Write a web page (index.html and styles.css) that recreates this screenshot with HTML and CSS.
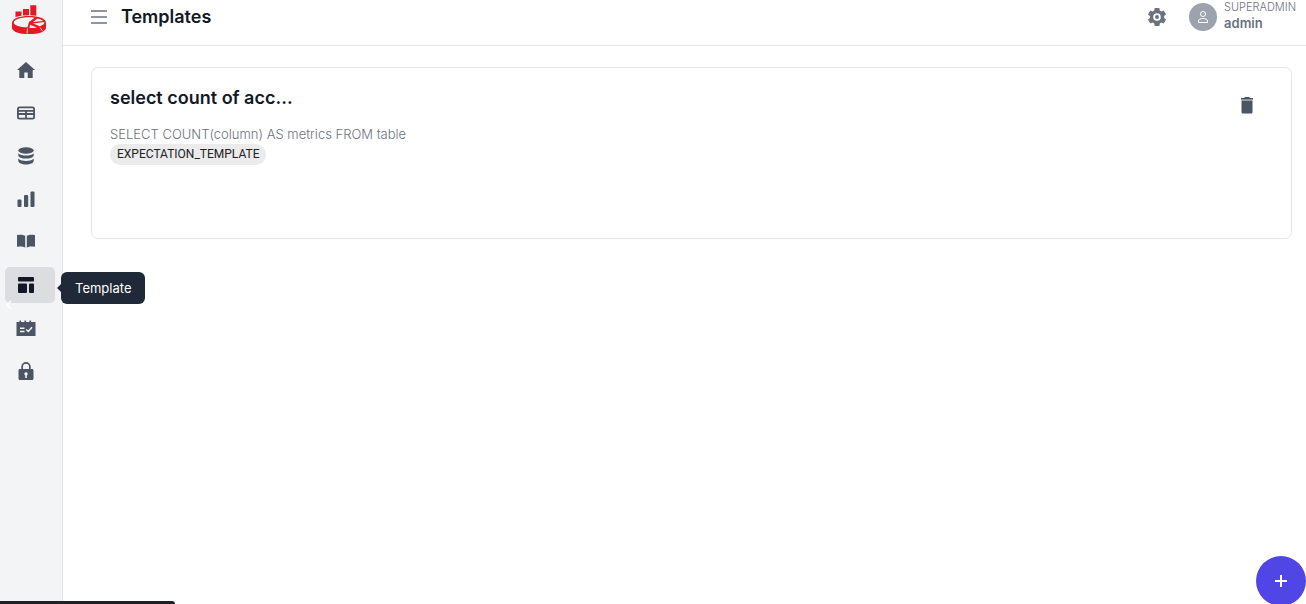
FILE: index.html
```html
<!DOCTYPE html>
<html lang="en">
<head>
    <meta charset="UTF-8">
    <meta name="viewport" content="width=device-width, initial-scale=1">
    <title>Templates</title>
    <link rel="stylesheet" href="styles.css">
</head>
<body>
    <div class="app">
        <!-- Sidebar -->
        <aside class="sidebar">
            <a class="logo" href="#" aria-label="Home page">
                <svg width="34" height="30" viewBox="0 0 34 30">
                    <path fill="#e11b22" d="M3.500 6.500h6v4.200L3.500 12zM11 4h6v6.300l-6 .3zM18.300.3h6v10.400l-6-.5z"/>
                    <path fill="#e11b22" d="M0 18c0-4.600 7.500-7 17-7s17 2.400 17 7v4.500c0 4.300-7.500 6.600-17 6.600S0 26.800 0 22.500z"/>
                    <path fill="#f3f4f6" d="M1.800 17.400c.4-3 7-5.100 15.200-5.100 2.300 0 3.600.1 5.500.4l-5.500 4.300-1.500 5.300C8 22.200 1.600 20.200 1.800 17.400z"/>
                    <path fill="#f3f4f6" d="M25.500 13.400c2.500.6 4.500 1.500 5.500 2.500l-10 1.200zM21 18.400l11.300-1.300c.4 1.800-1.200 3.200-4.500 4.200zM18 19.800l7 2.700c-2 .4-4.500.6-7.500.6z"/>
                    <path fill="none" stroke="#f3f4f6" stroke-width=".8" d="M15.500 23.500l-.5 5.200M28 22.500l2.500 3.500"/>
                </svg>
            </a>
            <nav class="nav">
                <a class="nav-item" href="#" aria-label="Dashboard">
                    <svg class="icon" viewBox="0 0 20 20"><path d="M10 2L1 10h2.300v8h5v-5.500h3.400V18h5v-8H19z"/></svg>
                </a>
                <a class="nav-item" href="#" aria-label="Tables">
                    <svg class="icon" viewBox="0 0 20 20"><path fill-rule="evenodd" d="M3.500 3.500h13A2.500 2.500 0 0 1 19 6v8a2.500 2.500 0 0 1-2.500 2.500h-13A2.500 2.500 0 0 1 1 14V6a2.500 2.500 0 0 1 2.500-2.500zM3.500 5.300a.7.700 0 0 0-.7.700v1h14.400V6a.7.700 0 0 0-.7-.7zM2.800 8.800v1.300h6.300V8.800zm8.100 0v1.300h6.300V8.800zm-8.100 3.100V14c0 .4.300.7.700.7h5.600v-2.800zm8.100 0v2.800h5.600c.4 0 .7-.3.700-.7v-2.100z"/></svg>
                </a>
                <a class="nav-item" href="#" aria-label="Databases">
                    <svg class="icon" viewBox="0 0 20 20"><ellipse cx="10" cy="4.500" rx="7.700" ry="3.300"/><path d="M2.300 7.200C4 9 7 9.600 10 9.600S16 9 17.700 7.200v2c0 2-3.500 3.400-7.700 3.400s-7.700-1.400-7.700-3.400zM2.300 12.500C4 14.300 7 15 10 15s6-.7 7.700-2.500v2.300c0 2.200-3.500 3.700-7.700 3.700s-7.700-1.500-7.700-3.700z"/></svg>
                </a>
                <a class="nav-item" href="#" aria-label="Metrics">
                    <svg class="icon" viewBox="0 0 20 20"><rect x="1.500" y="10.500" width="4" height="7.500" rx="1"/><rect x="8" y="6" width="4.200" height="12" rx="1"/><rect x="14.500" y="2.500" width="4" height="15.500" rx="1"/></svg>
                </a>
                <a class="nav-item" href="#" aria-label="Catalog">
                    <svg class="icon" viewBox="0 0 20 20"><path d="M9.200 3.800C7.500 2.700 4 2.300 1.500 3c-.3.100-.5.300-.5.600v10.600c0 .5.300.7.800.6 2.200-.6 5.400-.5 7.400.8zM10.800 3.800c1.700-1.100 5.200-1.500 7.700-.8.300.1.500.3.500.6v10.600c0 .5-.3.700-.8.600-2.200-.6-5.400-.5-7.400.8z"/></svg>
                </a>
                <a class="nav-item active" href="#" aria-label="Template" aria-describedby="template-tip">
                    <svg class="icon" viewBox="0 0 20 20"><rect x="2" y="2" width="16" height="4.500" rx="1"/><rect x="2" y="8.500" width="9" height="9.500" rx="1"/><rect x="13" y="8.500" width="5" height="9.500" rx="1"/></svg>
                    <span class="tooltip" id="template-tip" role="tooltip">Template</span>
                    <svg class="chevron" viewBox="0 0 6 10"><path d="M5 1L1 5l4 4"/></svg>
                </a>
                <a class="nav-item" href="#" aria-label="Schedule">
                    <svg class="icon" viewBox="0 0 20 20"><path d="M.5 4h3V2.500h1.600V4h3.400V2.500h1.600V4h3.400V2.500h1.600V4h4.400v14H.5z"/><path class="cut" d="M4 10.300h4.500M4 13.500h4.500M10.300 11.500l2 2 3.700-4.300"/></svg>
                </a>
                <a class="nav-item" href="#" aria-label="Security">
                    <svg class="icon" viewBox="0 0 20 20"><path fill-rule="evenodd" d="M5.300 8V5.700a4.700 4.700 0 0 1 9.400 0V8h1.300c.9 0 1.500.6 1.500 1.500v8c0 .9-.6 1.500-1.500 1.500H4c-.9 0-1.500-.6-1.500-1.500v-8C2.500 8.600 3.100 8 4 8zM7 8h6V5.700a3 3 0 0 0-6 0zm3 3.300a1.700 1.700 0 0 0-.8 3.200V17h1.600v-2.500a1.700 1.700 0 0 0-.8-3.200z"/></svg>
                </a>
            </nav>
        </aside>

        <div class="content">
            <!-- Top bar -->
            <header class="topbar">
                <button class="icon-button" type="button" aria-label="Toggle menu">
                    <svg class="menu-icon" viewBox="0 0 16 14"><path d="M0 1h16M0 7h16M0 13h16"/></svg>
                </button>
                <h1 class="page-title">Templates</h1>
                <button class="icon-button settings" type="button" aria-label="Settings">
                    <svg width="20" height="20" viewBox="0 0 20 20"><path fill-rule="evenodd" d="M7.700 1h4.600l.5 2.500 1.500.9 2.400-.8 2.300 3.900L17.100 9.100v1.800l1.900 1.600-2.300 3.900-2.400-.8-1.500.9-.5 2.500H7.700l-.5-2.500-1.500-.9-2.400.8L1 12.500l1.900-1.600V9.100L1 7.500l2.300-3.900 2.400.8 1.500-.9zM10 6.200a3.800 3.800 0 1 0 0 7.600 3.800 3.800 0 0 0 0-7.600zM10 8a2 2 0 1 1 0 4 2 2 0 0 1 0-4z"/></svg>
                </button>
                <div class="user">
                    <span class="avatar">
                        <svg width="12" height="14" viewBox="0 0 12 14"><circle cx="6" cy="4" r="2.500"/><path d="M1.500 12.500V11c0-1.600 2-2.500 4.500-2.500s4.500.9 4.500 2.500v1.500z"/></svg>
                    </span>
                    <div class="user-text">
                        <div class="user-role">SUPERADMIN</div>
                        <div class="user-name">admin</div>
                    </div>
                </div>
            </header>

            <!-- Template list -->
            <main class="main">
                <article class="card">
                    <div class="card-body">
                        <h2 class="card-title">select count of acc...</h2>
                        <p class="card-text">SELECT COUNT(column) AS metrics FROM table</p>
                        <span class="tag">EXPECTATION_TEMPLATE</span>
                    </div>
                    <button class="icon-button delete" type="button" aria-label="Delete template">
                        <svg width="14" height="18" viewBox="0 0 14 18"><path d="M4.500 1h5v1H13v1.500H1V2h3.500zM1.500 5h11v11c0 .8-.5 1.500-1.300 1.500H2.800c-.8 0-1.300-.7-1.300-1.500z"/><path opacity=".55" d="M1.500 3.500h11V5h-11z"/></svg>
                    </button>
                </article>
            </main>
        </div>
    </div>

    <button class="fab" type="button" aria-label="Add template">
        <svg width="12" height="12" viewBox="0 0 12 12"><path d="M6 0v12M0 6h12"/></svg>
    </button>
    <div class="status-bar"></div>
</body>
</html>
```
FILE: styles.css
```css
/* General Styles */
* {
    box-sizing: border-box;
}

body {
    margin: 0;
    font-family: Inter, "Liberation Sans", sans-serif;
    background-color: #ffffff;
    color: #111827;
    overflow: hidden;
}

h1, h2, p {
    margin: 0;
}

.app {
    display: flex;
    min-height: 100vh;
}

.icon-button {
    display: flex;
    padding: 0;
    border: 0;
    background: none;
    cursor: pointer;
}

/* Sidebar */
.sidebar {
    flex: none;
    width: 63px;
    background-color: #f3f4f6;
    border-right: 1px solid #e2e4e8;
}

.logo {
    display: block;
    height: 52px;
    padding: 5px 0 0 12px;
}

.nav {
    display: flex;
    flex-direction: column;
    gap: 7px;
    padding: 0 7px 0 5px;
}

.nav-item {
    position: relative;
    display: flex;
    align-items: center;
    height: 36px;
    padding-left: 11px;
    border-radius: 5px;
    color: #4b5563;
}

.nav-item.active {
    background-color: #dcdde0;
    color: #111827;
}

.icon {
    width: 20px;
    height: 20px;
    fill: currentColor;
}

.icon .cut {
    fill: none;
    stroke: #f3f4f6;
    stroke-width: 1.5;
}

.tooltip {
    position: absolute;
    left: 56px;
    top: 5px;
    padding: 0 14px;
    border-radius: 6px;
    background-color: #1f2937;
    color: #ffffff;
    font-size: 13px;
    line-height: 32px;
    z-index: 1;
}

.tooltip::before {
    content: "";
    position: absolute;
    left: -4px;
    top: 12px;
    border: 4px solid transparent;
    border-left: 0;
    border-right-color: #1f2937;
}

.chevron {
    position: absolute;
    left: 1px;
    top: 33px;
    width: 6px;
    height: 10px;
    fill: none;
    stroke: #ffffff;
    stroke-width: 1.5;
    z-index: 1;
}

/* Top bar */
.content {
    flex: 1;
    min-width: 0;
}

.topbar {
    display: flex;
    align-items: center;
    height: 46px;
    padding: 0 10px 12px 28px;
    border-bottom: 1px solid #e5e7eb;
}

.menu-icon {
    width: 16px;
    height: 14px;
    fill: none;
    stroke: #6b7280;
    stroke-width: 1.5;
}

.page-title {
    margin-left: 14px;
    font-size: 18px;
    line-height: 24px;
    font-weight: 600;
}

.settings {
    margin-left: auto;
    fill: #6b7280;
}

.user {
    display: flex;
    align-items: center;
    gap: 7px;
    margin-left: 22px;
    color: #6b7280;
}

.avatar {
    display: flex;
    align-items: center;
    justify-content: center;
    width: 28px;
    height: 28px;
    border-radius: 50%;
    background-color: #9ca3af;
    fill: none;
    stroke: #ffffff;
}

.user-text {
    padding-bottom: 4px;
}

.user-role {
    font-size: 11px;
    line-height: 16px;
    font-weight: 300;
}

.user-name {
    font-size: 13px;
    line-height: 16px;
    font-weight: 600;
}

/* Template card */
.main {
    padding: 21px 14px 21px 28px;
}

.card {
    display: flex;
    justify-content: space-between;
    align-items: flex-start;
    min-height: 172px;
    padding: 18px;
    border: 1px solid #e5e7eb;
    border-radius: 7px;
}

.card-title {
    font-size: 18px;
    line-height: 24px;
    font-weight: 600;
}

.card-text {
    margin-top: 14px;
    font-size: 13px;
    line-height: 20px;
    font-weight: 300;
    color: #6b7280;
}

.tag {
    display: block;
    width: max-content;
    padding: 0 7px;
    border-radius: 11px;
    background-color: #ebebeb;
    color: #212121;
    font-family: Roboto, sans-serif;
    font-size: 12px;
    line-height: 21px;
}

.delete {
    margin: 10px 19px 0 0;
    fill: #4b5563;
}

/* Floating add button */
.fab {
    position: fixed;
    right: 0;
    bottom: -2px;
    display: flex;
    align-items: center;
    justify-content: center;
    width: 50px;
    height: 50px;
    padding: 0;
    border: 0;
    border-radius: 50%;
    background-color: #4f46e5;
    stroke: #ffffff;
    stroke-width: 2;
    cursor: pointer;
}

.status-bar {
    position: fixed;
    left: 0;
    bottom: 0;
    width: 175px;
    height: 3px;
    border-top-right-radius: 3px;
    background-color: #202124;
}
```
